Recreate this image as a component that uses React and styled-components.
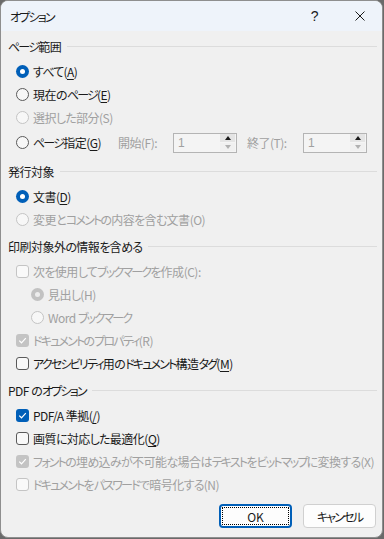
import React from 'react'
import styled, { createGlobalStyle, css } from 'styled-components'

const Global = createGlobalStyle`
html, body {
  margin: 0;
  padding: 0;
  background: #6a6a6a;
}
body {
  font-family: "Noto Sans CJK JP", "Noto Sans", sans-serif;
  font-size: 12px;
  font-feature-settings: "palt";
  letter-spacing: -0.5px;
  color: #1a1a1a;
}
`

const Dialog = styled.div`
width: 383px;
height: 538px;
box-sizing: border-box;
border: 1px solid #8e8e8e;
border-radius: 8px;
overflow: hidden;
background: #f0f0f0;
display: flex;
flex-direction: column;
`
const TitleBar = styled.div`
height: 30px;
flex: none;
display: flex;
align-items: center;
background: #eef3fa;
padding-left: 9px;
`
const TitleText = styled.div`
flex: 1;
font-size: 12px;
color: #1a1a1a;
`
const TitleButton = styled.div`
width: 45px;
height: 30px;
display: flex;
align-items: center;
justify-content: center;
font-family: "Liberation Sans", sans-serif;
font-size: 14px;
color: #1a1a1a;
`
const Content = styled.div`
flex: 1;
display: flex;
flex-direction: column;
padding: 5px 5px 0 7px;
`
const SectionHeader = styled.div`
height: 20px;
display: flex;
align-items: center;
gap: 6px;
margin-bottom: 4px;
margin-top: ${p => p.$first ? '0' : '5px'};
color: #1a1a1a;

&::after {
  content: '';
  flex: 1;
  height: 1px;
  background: #dcdcdc;
}
`
const Row = styled.div`
height: ${p => p.$tall ? '27px' : '23px'};
display: flex;
align-items: center;
padding-left: ${p => p.$indent || 8}px;
`
const OptionBox = styled.label`
display: flex;
align-items: center;
gap: 4px;
width: ${p => p.$width ? p.$width + 'px' : 'auto'};
color: ${p => p.$disabled ? '#a0a0a0' : '#1a1a1a'};
white-space: nowrap;
`
const RadioMark = styled.span`
width: 13px;
height: 13px;
box-sizing: border-box;
border-radius: 50%;
flex: none;
display: flex;
align-items: center;
justify-content: center;
border: 1px solid ${p => p.$disabled ? '#c4c4c4' : '#5a5a5a'};
background: #f7f7f7;
${p => p.$checked && css`
  border: none;
  background: ${p.$disabled ? '#c2c2c2' : '#005fb8'};
  &::after {
    content: '';
    width: 5px;
    height: 5px;
    border-radius: 50%;
    background: ${p.$disabled ? '#ededed' : '#ffffff'};
  }
`}
`
const CheckMark = styled.span`
width: 13px;
height: 13px;
box-sizing: border-box;
border-radius: 3px;
flex: none;
display: flex;
align-items: center;
justify-content: center;
border: 1px solid ${p => p.$disabled ? '#c4c4c4' : '#5a5a5a'};
background: #f9f9f9;
${p => p.$checked && css`
  border: none;
  background: ${p.$disabled ? '#c4c4c4' : '#005fb8'};
`}
`
const Key = styled.span`
text-decoration: ${p => p.$u ? 'underline' : 'none'};
text-underline-offset: 2px;
`
// Yu Gothic UI draws kana much narrower than Noto; tighten them
const Kana = styled.span`
letter-spacing: -1.8px;
`
const Hira = styled.span`
letter-spacing: -0.8px;
`
const FieldLabel = styled.div`
width: ${p => p.$width}px;
color: #a0a0a0;
white-space: nowrap;
`
const SpinBox = styled.div`
width: 64px;
height: 20px;
box-sizing: border-box;
border: 1px solid #b4b4b4;
background: #f4f4f4;
display: flex;
margin-right: ${p => p.$gap || 0}px;
`
const SpinValue = styled.div`
flex: 1;
padding-left: 4px;
line-height: 18px;
color: #a0a0a0;
font-family: "Liberation Sans", sans-serif;
font-size: 12px;
`
const SpinButtons = styled.div`
width: 15px;
display: flex;
flex-direction: column;
gap: 1px;
padding: 0 1px 1px 0;
`
const SpinArrow = styled.div`
flex: 1;
display: flex;
align-items: center;
justify-content: center;
background: ${p => p.$down ? '#f0f0f0' : '#e4e4e4'};

&::after {
  content: '';
  border-left: 3.5px solid transparent;
  border-right: 3.5px solid transparent;
  ${p => p.$down
    ? css`border-top: 4px solid #b0b0b0;`
    : css`border-bottom: 4px solid #1a1a1a;`}
}
`
const ButtonRow = styled.div`
display: flex;
justify-content: flex-end;
gap: 11px;
margin-top: 8px;
padding-right: 1px;
`
const DialogButton = styled.button`
width: 73px;
height: 24px;
box-sizing: border-box;
border-radius: 4px;
background: #fdfdfd;
font-family: "Noto Sans CJK JP", sans-serif;
font-feature-settings: "palt";
font-size: 12px;
letter-spacing: 0;
color: #1a1a1a;
padding: 0;
border: 1px solid #d0d0d0;
${p => p.$primary && css`
  border: 2px solid #005fb8;
  outline: 1px dotted #000;
  outline-offset: -4px;
`}
`

const jp = (text) =>
  text.split(/([\u30A0-\u30FF]+|[\u3040-\u309F]+)/).filter(Boolean).map((s, i) => {
    if (/[\u30A0-\u30FF]/.test(s)) return <Kana key={i}>{s}</Kana>
    if (/[\u3040-\u309F]/.test(s)) return <Hira key={i}>{s}</Hira>
    return s
  })

const Tick = () => (
  <svg width="9" height="9" viewBox="0 0 9 9">
    <path d="M1.2 4.6 L3.5 6.8 L7.8 2.2" stroke="#fff" strokeWidth="1.2" fill="none" />
  </svg>
)

const Label = ({ text, k, u }) => (
  <span>{jp(text)}(<Key $u={u}>{k}</Key>){k === 'C' ? ':' : ''}</span>
)

const Radio = ({ checked, disabled, width, children }) => (
  <OptionBox $disabled={disabled} $width={width}>
    <RadioMark $checked={checked} $disabled={disabled} />
    {children}
  </OptionBox>
)

const Check = ({ checked, disabled, children }) => (
  <OptionBox $disabled={disabled}>
    <CheckMark $checked={checked} $disabled={disabled}>{checked && <Tick />}</CheckMark>
    {children}
  </OptionBox>
)

export default function App() {
  return (
    <>
      <Global />
      <Dialog>
        <TitleBar>
          <TitleText>{jp('オプション')}</TitleText>
          <TitleButton>?</TitleButton>
          <TitleButton>
            <svg width="10" height="10" viewBox="0 0 10 10">
              <path d="M0.5 0.5 L9.5 9.5 M9.5 0.5 L0.5 9.5" stroke="#1a1a1a" strokeWidth="1" />
            </svg>
          </TitleButton>
        </TitleBar>
        <Content>
          <SectionHeader $first><span>{jp('ページ範囲')}</span></SectionHeader>
          <Row><Radio checked><Label text="すべて" k="A" u /></Radio></Row>
          <Row><Radio><Label text="現在のページ" k="E" u /></Radio></Row>
          <Row><Radio disabled><Label text="選択した部分" k="S" /></Radio></Row>
          <Row $tall>
            <Radio width={102}><Label text="ページ指定" k="G" u /></Radio>
            <FieldLabel $width={55}>開始(F):</FieldLabel>
            <SpinBox $gap={10}>
              <SpinValue>1</SpinValue>
              <SpinButtons><SpinArrow /><SpinArrow $down /></SpinButtons>
            </SpinBox>
            <FieldLabel $width={56}>終了(T):</FieldLabel>
            <SpinBox>
              <SpinValue>1</SpinValue>
              <SpinButtons><SpinArrow /><SpinArrow $down /></SpinButtons>
            </SpinBox>
          </Row>

          <SectionHeader><span>発行対象</span></SectionHeader>
          <Row><Radio checked><Label text="文書" k="D" u /></Radio></Row>
          <Row><Radio disabled><Label text="変更とコメントの内容を含む文書" k="O" /></Radio></Row>

          <SectionHeader><span>{jp('印刷対象外の情報を含める')}</span></SectionHeader>
          <Row><Check disabled><Label text="次を使用してブックマークを作成" k="C" /></Check></Row>
          <Row $indent={23}><Radio checked disabled><Label text="見出し" k="H" /></Radio></Row>
          <Row $indent={23}><Radio disabled><span>Word {jp('ブックマーク')}</span></Radio></Row>
          <Row><Check checked disabled><Label text="ドキュメントのプロパティ" k="R" /></Check></Row>
          <Row><Check><Label text="アクセシビリティ用のドキュメント構造タグ" k="M" u /></Check></Row>

          <SectionHeader><span>PDF {jp('のオプション')}</span></SectionHeader>
          <Row><Check checked><Label text="PDF/A 準拠" k="/" u /></Check></Row>
          <Row><Check><Label text="画質に対応した最適化" k="Q" u /></Check></Row>
          <Row><Check checked disabled><Label text="フォントの埋め込みが不可能な場合はテキストをビットマップに変換する" k="X" /></Check></Row>
          <Row><Check disabled><Label text="ドキュメントをパスワードで暗号化する" k="N" /></Check></Row>

          <ButtonRow>
            <DialogButton $primary>OK</DialogButton>
            <DialogButton>{jp('キャンセル')}</DialogButton>
          </ButtonRow>
        </Content>
      </Dialog>
    </>
  )
}
